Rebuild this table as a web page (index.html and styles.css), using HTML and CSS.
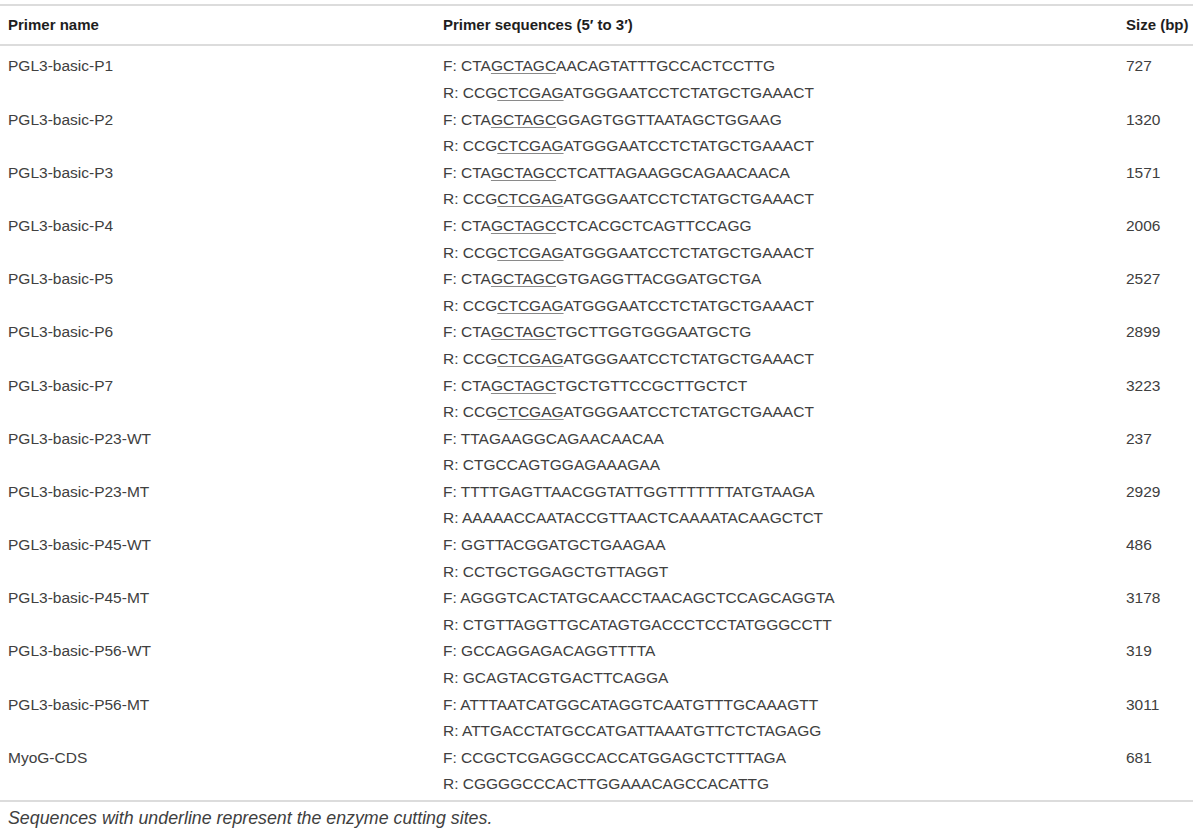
FILE: index.html
```html
<!doctype html>
<html lang="en">
  <head>
    <meta charset="UTF-8" />
    <meta name="viewport" content="width=device-width, initial-scale=1.0" />
    <title>Primer table</title>
    <link rel="stylesheet" href="styles.css">
  </head>
  <body>
    <div class="table-wrap">
      <table class="primers">
        <thead>
          <tr>
            <th class="col-name">Primer name</th>
            <th class="col-seq">Primer sequences (5′ to 3′)</th>
            <th class="col-size">Size (bp)</th>
          </tr>
        </thead>
        <tbody>
          <tr>
            <td>PGL3-basic-P1</td>
            <td>F: CTA<u>GCTAGC</u>AACAGTATTTGCCACTCCTTG<br>R: CCG<u>CTCGAG</u>ATGGGAATCCTCTATGCTGAAACT</td>
            <td>727</td>
          </tr>
          <tr>
            <td>PGL3-basic-P2</td>
            <td>F: CTA<u>GCTAGC</u>GGAGTGGTTAATAGCTGGAAG<br>R: CCG<u>CTCGAG</u>ATGGGAATCCTCTATGCTGAAACT</td>
            <td>1320</td>
          </tr>
          <tr>
            <td>PGL3-basic-P3</td>
            <td>F: CTA<u>GCTAGC</u>CTCATTAGAAGGCAGAACAACA<br>R: CCG<u>CTCGAG</u>ATGGGAATCCTCTATGCTGAAACT</td>
            <td>1571</td>
          </tr>
          <tr>
            <td>PGL3-basic-P4</td>
            <td>F: CTA<u>GCTAGC</u>CTCACGCTCAGTTCCAGG<br>R: CCG<u>CTCGAG</u>ATGGGAATCCTCTATGCTGAAACT</td>
            <td>2006</td>
          </tr>
          <tr>
            <td>PGL3-basic-P5</td>
            <td>F: CTA<u>GCTAGC</u>GTGAGGTTACGGATGCTGA<br>R: CCG<u>CTCGAG</u>ATGGGAATCCTCTATGCTGAAACT</td>
            <td>2527</td>
          </tr>
          <tr>
            <td>PGL3-basic-P6</td>
            <td>F: CTA<u>GCTAGC</u>TGCTTGGTGGGAATGCTG<br>R: CCG<u>CTCGAG</u>ATGGGAATCCTCTATGCTGAAACT</td>
            <td>2899</td>
          </tr>
          <tr>
            <td>PGL3-basic-P7</td>
            <td>F: CTA<u>GCTAGC</u>TGCTGTTCCGCTTGCTCT<br>R: CCG<u>CTCGAG</u>ATGGGAATCCTCTATGCTGAAACT</td>
            <td>3223</td>
          </tr>
          <tr>
            <td>PGL3-basic-P23-WT</td>
            <td>F: TTAGAAGGCAGAACAACAA<br>R: CTGCCAGTGGAGAAAGAA</td>
            <td>237</td>
          </tr>
          <tr>
            <td>PGL3-basic-P23-MT</td>
            <td>F: TTTTGAGTTAACGGTATTGGTTTTTTTATGTAAGA<br>R: AAAAACCAATACCGTTAACTCAAAATACAAGCTCT</td>
            <td>2929</td>
          </tr>
          <tr>
            <td>PGL3-basic-P45-WT</td>
            <td>F: GGTTACGGATGCTGAAGAA<br>R: CCTGCTGGAGCTGTTAGGT</td>
            <td>486</td>
          </tr>
          <tr>
            <td>PGL3-basic-P45-MT</td>
            <td>F: AGGGTCACTATGCAACCTAACAGCTCCAGCAGGTA<br>R: CTGTTAGGTTGCATAGTGACCCTCCTATGGGCCTT</td>
            <td>3178</td>
          </tr>
          <tr>
            <td>PGL3-basic-P56-WT</td>
            <td>F: GCCAGGAGACAGGTTTTA<br>R: GCAGTACGTGACTTCAGGA</td>
            <td>319</td>
          </tr>
          <tr>
            <td>PGL3-basic-P56-MT</td>
            <td>F: ATTTAATCATGGCATAGGTCAATGTTTGCAAAGTT<br>R: ATTGACCTATGCCATGATTAAATGTTCTCTAGAGG</td>
            <td>3011</td>
          </tr>
          <tr>
            <td>MyoG-CDS</td>
            <td>F: CCGCTCGAGGCCACCATGGAGCTCTTTAGA<br>R: CGGGGCCCACTTGGAAACAGCCACATTG</td>
            <td>681</td>
          </tr>
        </tbody>
      </table>
      <p class="footnote">Sequences with underline represent the enzyme cutting sites.</p>
    </div>
  </body>
</html>
```

FILE: styles.css
```css
* {
  margin: 0;
  padding: 0;
  box-sizing: border-box;
}

body {
  font-family: "Liberation Sans", Arial, sans-serif;
  font-size: 15.5px;
  color: #404040;
  background: #fff;
}

.table-wrap {
  width: 1193px;
  padding-top: 4px;
}

.primers {
  width: 100%;
  border-collapse: collapse;
  border-top: 2px solid #dcdcdc;
  border-bottom: 2px solid #dcdcdc;
}

.primers th {
  text-align: left;
  font-size: 15px;
  font-weight: bold;
  color: #1e1e1e;
  line-height: 22px;
  padding: 8px 0;
  border-bottom: 2px solid #dcdcdc;
}

.primers td {
  vertical-align: top;
  line-height: 26.6px;
  padding: 0;
}

.primers tbody tr:first-child td {
  padding-top: 7.4px;
}

.primers tbody tr:last-child td {
  padding-bottom: 1.8px;
}

.col-name {
  width: 443px;
}

.col-seq {
  width: 683px;
}

.primers th:first-child,
.primers td:first-child {
  padding-left: 8px;
}

.primers u {
  text-decoration-color: #8a8a8a;
  text-underline-offset: 2px;
}

.footnote {
  font-size: 17.8px;
  font-style: italic;
  line-height: 22px;
  padding: 5px 0 0 8px;
  color: #404040;
}
```
